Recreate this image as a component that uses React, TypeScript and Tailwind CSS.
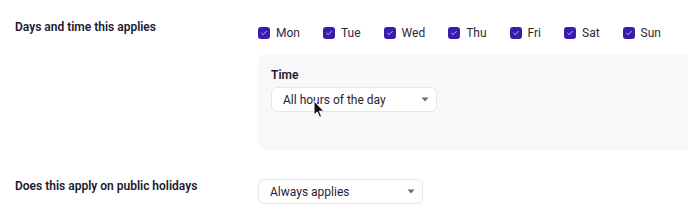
import React from "react";

const days = ["Mon", "Tue", "Wed", "Thu", "Fri", "Sat", "Sun"];

function Check() {
  return (
    <span className="flex h-[12px] w-[12px] items-center justify-center rounded-[3px] bg-[#3b1ca8]">
      <svg width="8" height="8" viewBox="0 0 8 8" fill="none">
        <path d="M1.6 4.2 L3.2 5.7 L6.4 2.3" stroke="#c9c0f0" strokeWidth="0.9" strokeLinecap="round" strokeLinejoin="round" />
      </svg>
    </span>
  );
}

function Caret() {
  return (
    <svg width="8" height="5" viewBox="0 0 8 5">
      <path d="M0.5 0.5 L7.5 0.5 L4 4.5 Z" fill="#6b6b78" />
    </svg>
  );
}

function Select({ label, w }: { label: string; w: string }) {
  return (
    <div className={`flex h-[25px] ${w} items-center justify-between rounded-[6px] border border-[#e6e6ec] bg-white pl-[11px] pr-[7px] text-[12px] text-[#1f1d33]`}>
      <span>{label}</span>
      <Caret />
    </div>
  );
}

export default function App() {
  return (
    <div className="relative h-[210px] w-[688px] overflow-hidden bg-white" style={{ fontFamily: "Roboto, 'Noto Sans', sans-serif" }}>
      <div className="flex pt-[15px]">
        <div className="mt-[3px] w-[258px] shrink-0 pl-[15px] text-[12px] font-semibold leading-[18px] text-[#1c1a33]">
          Days and time this applies
        </div>
        <div className="flex flex-1 flex-col">
          <div className="mt-[9px] flex items-center gap-[23px]">
            {days.map((d) => (
              <div key={d} className="flex items-center gap-[6px] text-[12px] leading-[18px] text-[#2a2840]">
                <Check />
                <span>{d}</span>
              </div>
            ))}
          </div>
          <div className="mt-[12px] w-[460px] rounded-l-[8px] bg-[#f8f8fb] pb-[38px] pl-[13px] pt-[12px]">
            <div className="mb-[3px] text-[12px] font-semibold leading-[18px] text-[#1c1a33]">Time</div>
            <Select label="All hours of the day" w="w-[166px]" />
          </div>
        </div>
      </div>
      <div className="mt-[29px] flex">
        <div className="-mt-[2px] w-[258px] shrink-0 pl-[15px] text-[12px] font-semibold leading-[18px] text-[#1c1a33]">
          Does this apply on public holidays
        </div>
        <Select label="Always applies" w="w-[165px]" />
      </div>
      <svg className="absolute left-[313px] top-[100px]" width="12" height="19" viewBox="0 0 12 19">
        <path d="M1 1 L1 15 L4.3 12 L6.6 17.3 L8.6 16.4 L6.4 11.2 L10.8 11.2 Z" fill="#111" stroke="#fff" strokeWidth="1" strokeLinejoin="round" />
      </svg>
    </div>
  );
}
